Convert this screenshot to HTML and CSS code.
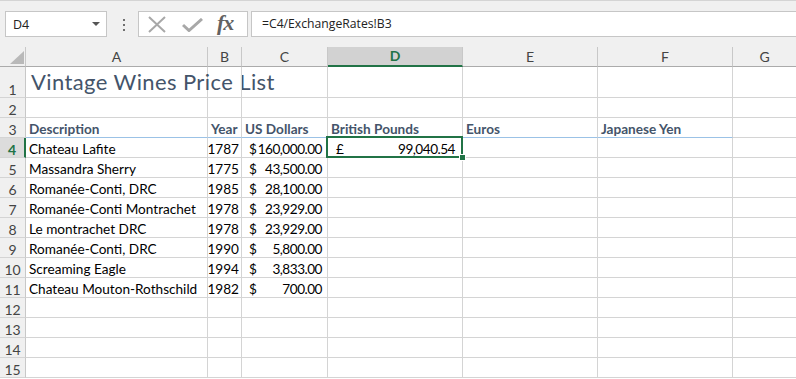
FILE: index.html
```html
<!DOCTYPE html>
<html>
<head>
<meta charset="utf-8">
<link rel="stylesheet" href="styles.css">
</head>
<body>
<div class="app">
  <div class="toolbar">
    <div class="namebox">
      <span class="nb-text">D4</span>
      <svg class="nb-arrow" width="8" height="4" viewBox="0 0 8 4"><path d="M0 0H8L4 4Z" fill="#555"/></svg>
    </div>
    <svg class="dots" width="4" height="14" viewBox="0 0 4 14"><rect x="1" y="1" width="2" height="2" fill="#6f6f6f"/><rect x="1" y="6" width="2" height="2" fill="#6f6f6f"/><rect x="1" y="11" width="2" height="2" fill="#6f6f6f"/></svg>
    <div class="fxbox">
      <svg class="ic-x" width="20" height="17" viewBox="0 0 20 17"><path d="M2 1L18 16M18 1L2 16" stroke="#a8a8a8" stroke-width="2" fill="none"/></svg>
      <svg class="ic-check" width="21" height="14" viewBox="0 0 21 14"><path d="M1 7L7 12.5L20 1" stroke="#a8a8a8" stroke-width="3" fill="none"/></svg>
      <span class="fx">fx</span>
    </div>
    <div class="formula">=C4/ExchangeRates!B3</div>
  </div>

  <div class="sheet">
    <div class="corner"><svg width="14" height="13" viewBox="0 0 14 13"><path d="M14 0V13H0Z" fill="#b9b9b9"/></svg></div>
    <div class="ch">A</div><div class="ch">B</div><div class="ch">C</div><div class="ch sel">D</div><div class="ch">E</div><div class="ch">F</div><div class="ch last">G</div>

    <div class="rh">1</div><div class="c title">Vintage Wines Price List</div><div class="c"></div><div class="c"></div><div class="c"></div><div class="c"></div><div class="c"></div><div class="c last"></div>

    <div class="rh">2</div><div class="c"></div><div class="c"></div><div class="c"></div><div class="c"></div><div class="c"></div><div class="c"></div><div class="c last"></div>

    <div class="rh">3</div><div class="c hd">Description</div><div class="c hd">Year</div><div class="c hd">US Dollars</div><div class="c hd">British Pounds</div><div class="c hd">Euros</div><div class="c hd">Japanese Yen</div><div class="c last"></div>

    <div class="rh rsel">4</div><div class="c">Chateau Lafite</div><div class="c num">1787</div><div class="c acc"><span>$</span><span class="amt">160,000.00</span></div><div class="c acc active"><span>£</span><span class="amt">99,040.54</span><i class="handle"></i></div><div class="c"></div><div class="c"></div><div class="c last"></div>

    <div class="rh">5</div><div class="c">Massandra Sherry</div><div class="c num">1775</div><div class="c acc"><span>$</span><span class="amt">43,500.00</span></div><div class="c"></div><div class="c"></div><div class="c"></div><div class="c last"></div>

    <div class="rh">6</div><div class="c">Romanée-Conti, DRC</div><div class="c num">1985</div><div class="c acc"><span>$</span><span class="amt">28,100.00</span></div><div class="c"></div><div class="c"></div><div class="c"></div><div class="c last"></div>

    <div class="rh">7</div><div class="c">Romanée-Conti Montrachet</div><div class="c num">1978</div><div class="c acc"><span>$</span><span class="amt">23,929.00</span></div><div class="c"></div><div class="c"></div><div class="c"></div><div class="c last"></div>

    <div class="rh">8</div><div class="c">Le montrachet DRC</div><div class="c num">1978</div><div class="c acc"><span>$</span><span class="amt">23,929.00</span></div><div class="c"></div><div class="c"></div><div class="c"></div><div class="c last"></div>

    <div class="rh">9</div><div class="c">Romanée-Conti, DRC</div><div class="c num">1990</div><div class="c acc"><span>$</span><span class="amt">5,800.00</span></div><div class="c"></div><div class="c"></div><div class="c"></div><div class="c last"></div>

    <div class="rh">10</div><div class="c">Screaming Eagle</div><div class="c num">1994</div><div class="c acc"><span>$</span><span class="amt">3,833.00</span></div><div class="c"></div><div class="c"></div><div class="c"></div><div class="c last"></div>

    <div class="rh">11</div><div class="c">Chateau Mouton-Rothschild</div><div class="c num">1982</div><div class="c acc"><span>$</span><span class="amt">700.00</span></div><div class="c"></div><div class="c"></div><div class="c"></div><div class="c last"></div>

    <div class="rh">12</div><div class="c"></div><div class="c"></div><div class="c"></div><div class="c"></div><div class="c"></div><div class="c"></div><div class="c last"></div>
    <div class="rh">13</div><div class="c"></div><div class="c"></div><div class="c"></div><div class="c"></div><div class="c"></div><div class="c"></div><div class="c last"></div>
    <div class="rh">14</div><div class="c"></div><div class="c"></div><div class="c"></div><div class="c"></div><div class="c"></div><div class="c"></div><div class="c last"></div>
    <div class="rh">15</div><div class="c"></div><div class="c"></div><div class="c"></div><div class="c"></div><div class="c"></div><div class="c"></div><div class="c last"></div>
  </div>
</div>
</body>
</html>
```

FILE: styles.css
```css
* { box-sizing: border-box; }
html, body { margin: 0; padding: 0; background: #ffffff; }
body { width: 796px; height: 379px; overflow: hidden; font-family: Lato, "Liberation Sans", sans-serif; }

.app { width: 796px; }

.toolbar {
  height: 47px;
  background: #f0f0f0;
  border-top: 1px solid #d4d4d4;
  display: flex;
  align-items: flex-start;
  padding: 10px 0 0 5px;
}
.namebox {
  width: 102px;
  height: 26px;
  background: #fff;
  border: 1px solid #c6c6c6;
  display: flex;
  align-items: center;
  justify-content: space-between;
  padding: 0 6px 0 7px;
}
.nb-text { font-family: "Open Sans", sans-serif; font-size: 12.5px; color: #222; }
.dots { margin: 7px 0 0 15px; }
.fxbox {
  margin-left: 12px;
  width: 110px;
  height: 26px;
  background: #fff;
  border: 1px solid #c6c6c6;
  display: flex;
  align-items: center;
  padding-left: 8px;
}
.ic-x { margin-top: 1px; }
.ic-check { margin-left: 15px; margin-top: 1px; }
.fx {
  margin-left: 14px;
  font-family: "Liberation Serif", serif;
  font-style: italic;
  font-weight: 700;
  font-size: 22px;
  color: #626262;
  letter-spacing: -1px;
  margin-top: -3px;
}
.formula {
  margin-left: 3px;
  flex: 1;
  height: 26px;
  background: #fff;
  border: 1px solid #c6c6c6;
  border-right: none;
  padding-left: 10px;
  font-family: "Open Sans", sans-serif;
  font-size: 12.2px;
  color: #222;
  line-height: 24px;
}

.sheet {
  display: grid;
  grid-template-columns: 26px 182px 34px 86px 135px 135px 135px 1fr;
  grid-template-rows: 20px 31px repeat(14, 20px);
}
.corner {
  background: #f0f0f0;
  border-right: 1px solid #c8c8c8;
  border-bottom: 1px solid #ababab;
  display: flex;
  align-items: flex-end;
  justify-content: flex-end;
  padding: 0 1px 2px 0;
}
.corner svg { display: block; }
.ch {
  background: #f0f0f0;
  border-right: 1px solid #c8c8c8;
  border-bottom: 1px solid #ababab;
  text-align: center;
  font-size: 14px;
  line-height: 19px;
  color: #444;
}
.ch.sel {
  background: #d2d2d2;
  border-bottom: 2px solid #217346;
  color: #217346;
  font-weight: 700;
  line-height: 18px;
}
.ch.last { border-right: none; }
.rh {
  background: #f0f0f0;
  border-right: 1px solid #c8c8c8;
  border-bottom: 1px solid #d4d4d4;
  font-size: 14px;
  color: #444;
  text-align: center;
  display: flex;
  align-items: flex-end;
  justify-content: center;
  line-height: 15px;
}
.rh.rsel {
  background: #dcdcdc;
  color: #217346;
  border-right: 2px solid #217346;
  font-weight: 700;
}
.c {
  border-right: 1px solid #d4d4d4;
  border-bottom: 1px solid #d4d4d4;
  font-size: 13.6px;
  color: #000;
  line-height: 15px;
  padding: 0 3px 0 3px;
  display: flex;
  align-items: flex-end;
  white-space: nowrap;
  position: relative;
}
.c.last { border-right: none; }
.title {
  font-size: 22px;
  font-weight: 400;
  letter-spacing: 0.4px;
  color: #44546a;
  line-height: 26px;
  padding-left: 5px;
  padding-bottom: 2px;
}
.hd {
  font-weight: 700;
  color: #44546a;
  border-bottom: 1px solid #9bc2e6;
}
.num { justify-content: flex-end; padding-right: 2px; }
.acc { justify-content: space-between; padding-left: 7px; padding-right: 5px; }
.amt { letter-spacing: -0.5px; }
.active { padding-left: 8px; padding-right: 7px; }
.active::after {
  content: "";
  position: absolute;
  left: -2px; top: -2px; right: -1px; bottom: -1px;
  border: 2px solid #217346;
  pointer-events: none;
}
.handle {
  position: absolute;
  right: -4px;
  bottom: -4px;
  width: 7px;
  height: 7px;
  background: #217346;
  border: 1px solid #fff;
  z-index: 2;
}
```
